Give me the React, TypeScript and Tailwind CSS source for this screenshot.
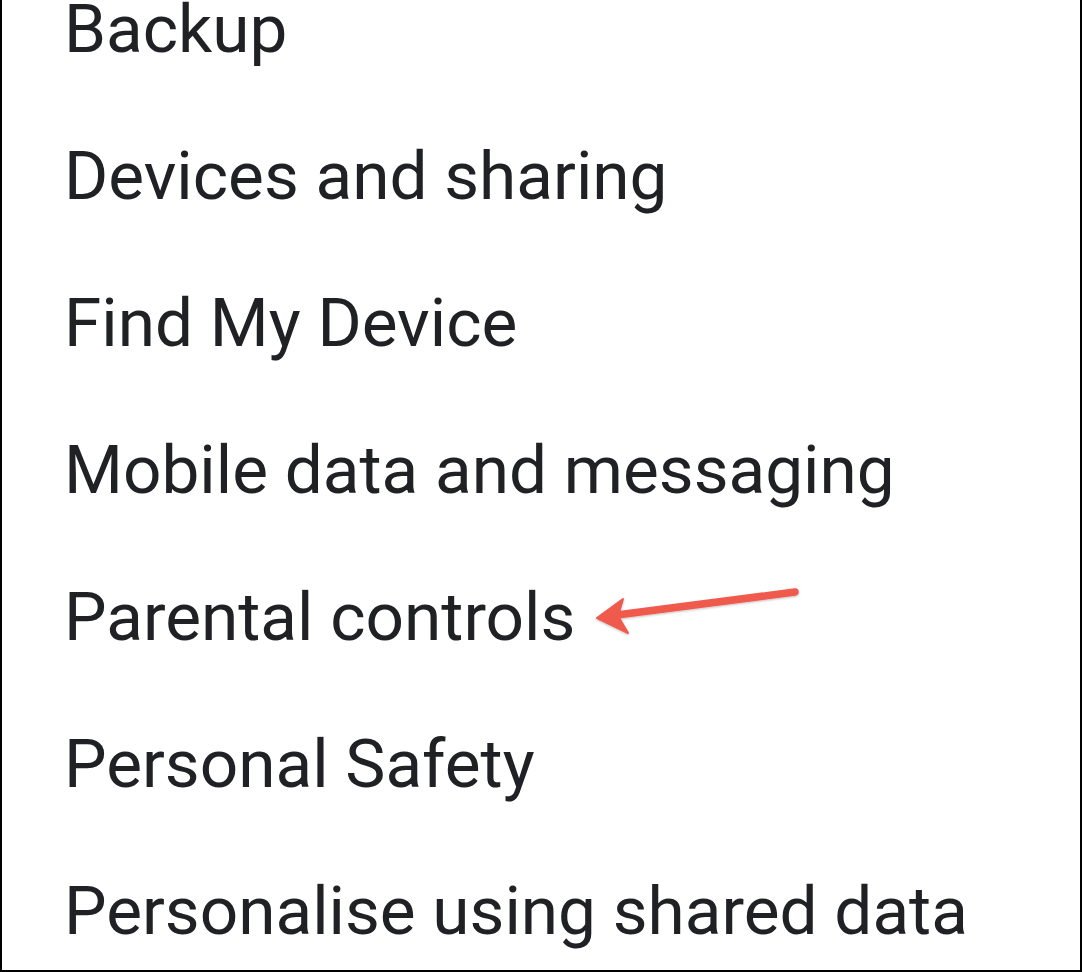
import React from 'react';

const items = [
  'Backup',
  'Devices and sharing',
  'Find My Device',
  'Mobile data and messaging',
  'Parental controls',
  'Personal Safety',
  'Personalise using shared data',
];

const Arrow: React.FC = () => (
  <svg width="230" height="60" viewBox="0 0 230 60" className="absolute left-[585px] top-[580px]">
    <defs>
      <filter id="sh" x="-10%" y="-30%" width="120%" height="160%">
        <feDropShadow dx="0" dy="1" stdDeviation="1.2" floodColor="#000" floodOpacity="0.25" />
      </filter>
    </defs>
    <g filter="url(#sh)" fill="#ef5a4e" stroke="#ef5a4e">
      <line x1="208" y1="12" x2="30" y2="35" strokeWidth="7.5" strokeLinecap="round" />
      <path d="M10 38 L36 19 L31 36 L41 53 Z" strokeWidth="2" strokeLinejoin="round" />
    </g>
  </svg>
);

const App: React.FC = () => {
  return (
    <div className="relative w-[1082px] h-[972px] overflow-hidden bg-white border-x-2 border-b-2 border-black">
      <div className="flex flex-col pl-[62px] -mt-[45px]">
        {items.map((label) => (
          <div
            key={label}
            className="h-[147px] flex items-center text-[67.5px] text-[#202124] leading-none font-['Roboto',sans-serif]"
          >
            {label}
          </div>
        ))}
      </div>
      <Arrow />
    </div>
  );
};

export default App;
